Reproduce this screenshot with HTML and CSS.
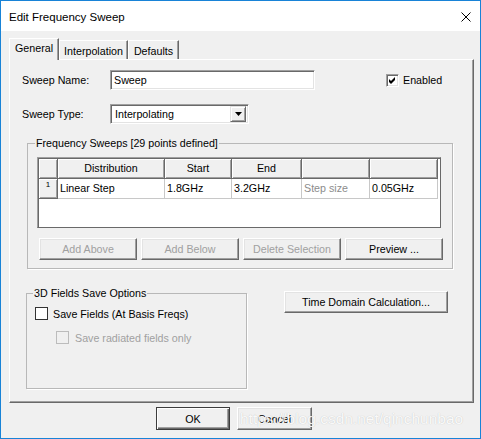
FILE: index.html
```html
<!DOCTYPE html>
<html lang="en">
<head>
    <meta charset="UTF-8">
    <title>Edit Frequency Sweep</title>
    <link rel="stylesheet" href="styles.css">
</head>
<body>

    <div class="window">
        <div class="titlebar">
            <span class="title">Edit Frequency Sweep</span>
            <svg class="close" width="10" height="10" viewBox="0 0 10 10">
                <path d="M0.5 0.5 L9.5 9.5 M9.5 0.5 L0.5 9.5" stroke="#000" stroke-width="1" fill="none"/>
            </svg>
        </div>

        <div class="client">
            <!-- Tab strip -->
            <div class="tabs">
                <div class="tab active" style="width: 50px;">General</div>
                <div class="tab" style="width: 69px;">Interpolation</div>
                <div class="tab" style="width: 51px;">Defaults</div>
            </div>

            <div class="panel">
                <div class="field-row first">
                    <label class="field-label">Sweep Name:</label>
                    <div class="textbox name-box">Sweep</div>
                    <span class="check classic"><svg width="7" height="7" viewBox="0 0 7 7"><path d="M0 2 L2 4 L6 0 L6 3 L2 7 L0 5 Z" fill="#000"/></svg></span>
                    <span class="check-label">Enabled</span>
                </div>

                <div class="field-row second">
                    <label class="field-label">Sweep Type:</label>
                    <div class="textbox combo">
                        <span class="combo-text">Interpolating</span>
                        <span class="combo-btn"><svg width="7" height="4" viewBox="0 0 7 4"><path d="M0 0 H7 L3.5 4 Z" fill="#000"/></svg></span>
                    </div>
                </div>

                <!-- Frequency sweeps group -->
                <div class="group sweeps">
                    <div class="group-title">Frequency Sweeps [29 points defined]</div>
                    <div class="grid">
                        <div class="hcell"></div>
                        <div class="hcell">Distribution</div>
                        <div class="hcell">Start</div>
                        <div class="hcell">End</div>
                        <div class="hcell"></div>
                        <div class="hcell"></div>

                        <div class="hcell rownum">1</div>
                        <div class="cell">Linear Step</div>
                        <div class="cell">1.8GHz</div>
                        <div class="cell">3.2GHz</div>
                        <div class="cell hint">Step size</div>
                        <div class="cell">0.05GHz</div>
                    </div>
                    <div class="button-row">
                        <button class="btn disabled">Add Above</button>
                        <button class="btn disabled">Add Below</button>
                        <button class="btn disabled">Delete Selection</button>
                        <button class="btn">Preview ...</button>
                    </div>
                </div>

                <div class="lower-row">
                    <div class="group fields">
                        <div class="group-title">3D Fields Save Options</div>
                        <div class="opt-row">
                            <span class="check flat"></span>
                            <span class="check-label">Save Fields (At Basis Freqs)</span>
                        </div>
                        <div class="opt-row sub">
                            <span class="check flat off"></span>
                            <span class="check-label grey">Save radiated fields only</span>
                        </div>
                    </div>
                    <button class="btn time-btn">Time Domain Calculation...</button>
                </div>
            </div>

            <div class="footer">
                <button class="btn default">OK</button>
                <button class="btn">Cancel</button>
            </div>
        </div>

        <div class="watermark">https://blog.csdn.net/qinchunbao</div>
    </div>

</body>
</html>
```

FILE: styles.css
```css
body {
    margin: 0;
    background-color: #ffffff;
    font-family: "Liberation Sans", Arial, sans-serif;
    font-size: 10.7px;
    color: #000;
}
.window {
    position: relative;
    width: 481px;
    height: 439px;
    box-sizing: border-box;
    border: 1px solid #1883d7;
    background-color: #f0f0f0;
    overflow: hidden;
}
.titlebar {
    height: 30px;
    background-color: #fff;
    display: flex;
    align-items: center;
    justify-content: space-between;
    padding: 0 9px 0 8px;
}
.title {
    font-size: 11.5px;
    color: #000;
    margin-top: 1px;
}
.close {
    margin-top: 1px;
}
.client {
    padding: 7px 6px 0 8px;
}

/* tabs */
.tabs {
    display: flex;
    align-items: flex-end;
    height: 21px;
}
.tab {
    box-sizing: border-box;
    height: 19px;
    border-top: 1px solid #fff;
    border-left: 1px solid #fff;
    border-right: 1px solid #696969;
    box-shadow: inset -1px 0 0 #a0a0a0;
    text-align: center;
    line-height: 19px;
    padding-top: 1px;
}
.tab.active {
    position: relative;
    z-index: 1;
    height: 22px;
    margin-bottom: -1px;
    line-height: 18px;
    padding-top: 0;
    background-color: #f0f0f0;
}
.panel {
    box-sizing: border-box;
    width: 465px;
    height: 344px;
    border-top: 1px solid #fff;
    border-left: 1px solid #fff;
    border-right: 1px solid #696969;
    border-bottom: 1px solid #696969;
    box-shadow: inset -1px -1px 0 #a0a0a0;
}

/* form rows */
.field-row {
    display: flex;
    align-items: center;
    height: 20px;
    padding-left: 12px;
}
.field-row.first {
    margin-top: 10px;
}
.field-row.second {
    margin-top: 14px;
}
.field-label {
    width: 88px;
}
.textbox {
    box-sizing: border-box;
    height: 20px;
    background-color: #fff;
    border-top: 1px solid #a0a0a0;
    border-left: 1px solid #a0a0a0;
    border-right: 1px solid #fff;
    border-bottom: 1px solid #fff;
    box-shadow: inset 1px 1px 0 #696969, inset -1px -1px 0 #e3e3e3;
    line-height: 18px;
    padding-left: 3px;
}
.name-box {
    width: 205px;
}
.combo {
    width: 139px;
    display: flex;
    align-items: center;
    justify-content: space-between;
    padding: 0 2px 0 4px;
}
.combo-btn {
    box-sizing: border-box;
    width: 16px;
    height: 16px;
    background-color: #f0f0f0;
    border-top: 1px solid #e3e3e3;
    border-left: 1px solid #e3e3e3;
    border-right: 1px solid #696969;
    border-bottom: 1px solid #696969;
    box-shadow: inset 1px 1px 0 #fff, inset -1px -1px 0 #a0a0a0;
    display: flex;
    align-items: center;
    justify-content: center;
}

/* check boxes */
.check {
    box-sizing: border-box;
    width: 13px;
    height: 13px;
    background-color: #fff;
    display: flex;
    align-items: center;
    justify-content: center;
    flex-shrink: 0;
}
.check.classic {
    margin-left: 71px;
    border-top: 1px solid #a0a0a0;
    border-left: 1px solid #a0a0a0;
    border-right: 1px solid #fff;
    border-bottom: 1px solid #fff;
    box-shadow: inset 1px 1px 0 #696969, inset -1px -1px 0 #e3e3e3;
}
.check.flat {
    border: 1px solid #333;
}
.check.flat.off {
    border-color: #bcbcbc;
    background-color: #f0f0f0;
}
.check-label {
    margin-left: 4px;
}
.grey {
    color: #a0a0a0;
}

/* group boxes */
.group {
    box-sizing: border-box;
    border: 1px solid #b8b8b8;
    box-shadow: 1px 1px 0 #fff;
}
.group-title {
    width: fit-content;
    margin-top: -7px;
    padding: 0 1px;
    line-height: 13px;
    background-color: #f0f0f0;
}
.sweeps {
    margin: 19px 0 0 17px;
    width: 426px;
    height: 126px;
}
.sweeps .group-title {
    margin-left: 7px;
}

/* sweep table */
.grid {
    box-sizing: border-box;
    margin: 7px 0 0 9px;
    width: 404px;
    height: 71px;
    background-color: #fff;
    border: 1px solid #a0a0a0;
    border-right-color: #696969;
    border-bottom-color: #696969;
    box-shadow: inset 1px 1px 0 #696969;
    padding: 1px 0 0 1px;
    display: grid;
    grid-template-columns: 19px 107px 67px 70px 68px 68px;
    grid-template-rows: 20px 20px;
    align-content: start;
}
.hcell {
    box-sizing: border-box;
    background-color: #f0f0f0;
    border-right: 1px solid #696969;
    border-bottom: 1px solid #696969;
    box-shadow: inset 1px 1px 0 #fff, inset -1px -1px 0 #a0a0a0;
    text-align: center;
    line-height: 19px;
}
.hcell.rownum {
    font-size: 8px;
    line-height: 12px;
}
.cell {
    box-sizing: border-box;
    border-right: 1px solid #c8c8c8;
    border-bottom: 1px solid #c8c8c8;
    padding-left: 2px;
    line-height: 19px;
}
.cell.hint {
    color: #8c8c8c;
}
.button-row {
    display: flex;
    gap: 4px;
    margin: 10px 0 0 11px;
}

/* buttons */
.btn {
    box-sizing: border-box;
    width: 98px;
    height: 22px;
    padding: 0;
    margin: 0;
    font-family: inherit;
    font-size: 10.7px;
    color: #000;
    background-color: #f0f0f0;
    border-top: 1px solid #fff;
    border-left: 1px solid #fff;
    border-right: 1px solid #696969;
    border-bottom: 1px solid #696969;
    box-shadow: inset -1px -1px 0 #a0a0a0, inset 1px 1px 0 #e3e3e3;
    border-radius: 0;
}
.btn.disabled {
    color: #a0a0a0;
}

.lower-row {
    display: flex;
    align-items: flex-start;
    margin-top: 24px;
}
.fields {
    margin-left: 16px;
    width: 221px;
    height: 96px;
}
.fields .group-title {
    margin-left: 6px;
}
.opt-row {
    display: flex;
    align-items: center;
    margin: 7px 0 0 8px;
}
.opt-row .check-label {
    margin-left: 5px;
}
.opt-row.sub {
    margin: 11px 0 0 29px;
}
.opt-row.sub .check-label {
    margin-left: 6px;
}
.time-btn {
    width: 164px;
    margin: -2px 0 0 37px;
}

/* dialog buttons */
.footer {
    display: flex;
    gap: 7px;
    margin: 4px 0 0 147px;
}
.footer .btn {
    width: 75px;
    height: 23px;
}
.footer .btn.default {
    width: 74px;
    border: 1px solid #3c3c3c;
    box-shadow: inset 1px 1px 0 #fff, inset -1px -1px 0 #696969, inset -2px -2px 0 #a0a0a0;
}

.watermark {
    position: absolute;
    left: 239px;
    top: 409px;
    font-family: "Liberation Sans", Arial, sans-serif;
    font-size: 15.5px;
    line-height: 18px;
    color: rgba(255, 255, 255, 0.92);
    text-shadow: 0 0 1px rgba(0, 0, 0, 0.22);
}
```
